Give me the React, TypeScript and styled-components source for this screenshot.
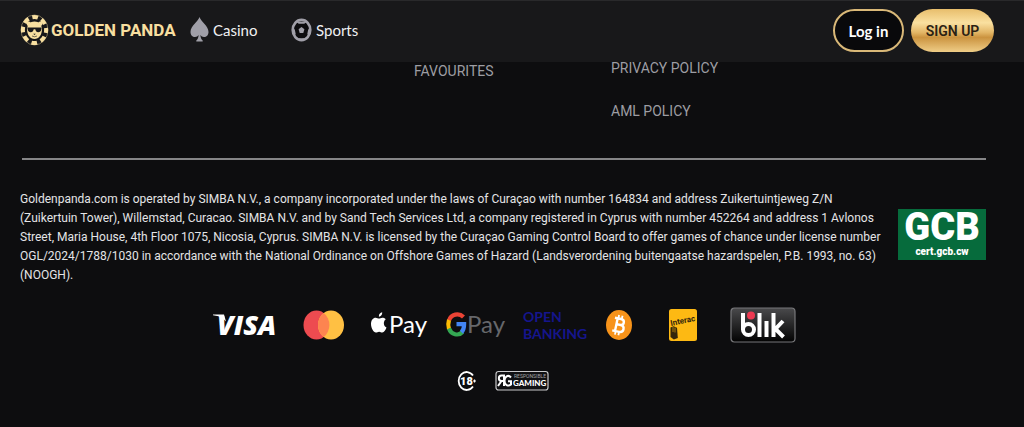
import React from 'react';
import styled, { createGlobalStyle } from 'styled-components';

const GlobalStyle = createGlobalStyle`
  * { box-sizing: border-box; }
  body {
    margin: 0;
    background: #0d0d0f;
    color: #e4e4e6;
    font-family: Roboto, 'Liberation Sans', sans-serif;
  }
  a { color: inherit; text-decoration: none; }
`;

const Header = styled.header`
  position: fixed;
  top: 0;
  left: 0;
  right: 0;
  z-index: 10;
  display: flex;
  align-items: center;
  justify-content: space-between;
  height: 62px;
  padding: 0 30px 2px 20px;
  background: #18181a;
  border-top: 1px solid #29292b;
`;

const Nav = styled.nav`
  display: flex;
  align-items: center;
  padding-bottom: 2px;
`;

const Brand = styled.a`
  display: flex;
  align-items: center;
  gap: 2px;
  width: 170px;
  color: #f8dfa0;
  font-size: 17px;
  font-weight: 700;
  white-space: nowrap;
`;

const NavLink = styled.a`
  display: flex;
  align-items: center;
  gap: 4px;
  width: 101px;
  color: #f0f0f2;
  font-family: Lato, sans-serif;
  font-size: 15px;
`;

const Actions = styled.div`
  display: flex;
  gap: 7px;
`;

const Button = styled.button<{ $gold?: boolean }>`
  height: 43px;
  width: ${(p) => (p.$gold ? 83 : 71)}px;
  padding: 0;
  border: ${(p) => (p.$gold ? '0' : '2px solid #d9b878')};
  border-radius: 22px;
  background: ${(p) =>
    p.$gold ? 'linear-gradient(180deg, #e8be6c 0%, #fae0a0 32%, #e2b565 55%, #cb933f 66%, #efcd87 100%)' : '#09090b'};
  color: ${(p) => (p.$gold ? '#2b2214' : '#ffffff')};
  font-family: ${(p) => (p.$gold ? 'Roboto' : 'Lato')}, sans-serif;
  font-size: ${(p) => (p.$gold ? 14 : 15)}px;
  font-weight: ${(p) => (p.$gold ? 600 : 700)};
`;

const Footer = styled.footer`
  padding: 58px 38px 32px 20px;
`;

const LinkColumns = styled.div`
  display: grid;
  grid-template-columns: 394px 197px 1fr;
  padding-bottom: 37px;
`;

const Divider = styled.hr`
  height: 2px;
  margin: 0 0 0 2px;
  border: 0;
  background: #858587;
`;

const LinkColumn = styled.div<{ $start: number; $lead?: number }>`
  grid-column: ${(p) => p.$start};
  display: flex;
  flex-direction: column;
  gap: 23px;
  padding-top: ${(p) => p.$lead ?? 0}px;
  color: #9d9da3;
  font-size: 14px;
  line-height: 20px;
`;

const Legal = styled.section`
  display: flex;
  align-items: center;
  justify-content: space-between;
  padding-top: 30px;
`;

const LegalText = styled.p`
  margin: 0;
  font-size: 12px;
  line-height: 19px;
  white-space: nowrap;
`;

const Seal = styled.a`
  display: flex;
  flex-direction: column;
  align-items: center;
  width: 88px;
  height: 51px;
  margin-bottom: 7px;
  background: #066b3c;
  color: #ffffff;
  font-weight: 900;
`;

const SealName = styled.span`
  font-size: 38px;
  line-height: 37px;
`;

const SealHost = styled.span`
  font-size: 10px;
  line-height: 12px;
`;

const LogoRow = styled.div<{ $gap: number; $top: number }>`
  display: flex;
  justify-content: center;
  align-items: center;
  gap: ${(p) => p.$gap}px;
  padding-top: ${(p) => p.$top}px;
`;

const Panda = () => (
  <svg width="29" height="32" viewBox="0 0 29 32" aria-hidden="true">
    <ellipse cx="14.500" cy="16" rx="13.500" ry="15" fill="none" stroke="#b9a77c" strokeWidth=".6" />
    <ellipse cx="14.500" cy="16" rx="11.600" ry="13" fill="none" stroke="#f8dfa0" strokeWidth="4" strokeDasharray="5.700 4" strokeDashoffset="2.800" />
    <ellipse cx="14.500" cy="16" rx="9" ry="10.200" fill="#18181a" />
    <circle cx="8.800" cy="9.800" r="2.200" fill="#f8dfa0" />
    <circle cx="20.200" cy="9.800" r="2.200" fill="#f8dfa0" />
    <path d="M14.500 7.500c4.500 0 7.400 3.200 7.400 8 0 5.500-3.200 9.500-7.400 9.500s-7.400-4-7.400-9.500c0-4.800 2.900-8 7.400-8Z" fill="#f8dfa0" />
    <path d="M7.500 13.500h14v1.200c-.5 2.600-1.600 3.500-3.300 3.500-1.600 0-2.500-1.200-2.900-3h-1.600c-.4 1.800-1.300 3-2.900 3-1.700 0-2.800-.9-3.300-3.500Z" fill="#18181a" />
    <path d="M13.200 19.800h2.600l-1.300 1.300Z" fill="#18181a" />
    <path d="M12 22q2.500 1.500 5 0" fill="none" stroke="#18181a" strokeWidth=".6" />
  </svg>
);

const Spade = () => (
  <svg width="19" height="25" viewBox="0 0 19 25" aria-hidden="true">
    <path d="M9.500 0C11 4.500 18.500 9 18.500 15c0 3-2 5-4.500 5-1.700 0-2.800-.8-3.600-2 .2 2.700.8 4.500 2.300 5.400V24.500H6.300v-1.100c1.500-.9 2.100-2.700 2.300-5.400-.8 1.200-1.900 2-3.600 2-2.500 0-4.500-2-4.500-5C.500 9 8 4.500 9.500 0Z" fill="#a09fa8" />
  </svg>
);

const Ball = () => (
  <svg width="21" height="24" viewBox="0 0 21 24" aria-hidden="true">
    <ellipse cx="10.500" cy="12" rx="8.800" ry="10.200" fill="#0c0c0e" stroke="#a09fa8" strokeWidth="2.600" />
    <path d="M5 3.500h11l-2.700 2.200h-5.600ZM1.500 10l2.300 1.500.9 4.500-1.600 1.800ZM19.500 10l-2.300 1.500-.9 4.500 1.600 1.800ZM7 20.200h7l-1.200 2.300H8.200Z" fill="#a09fa8" />
    <path d="m10.500 9 2.900 2.300-1.100 3.600H8.700l-1.100-3.600Z" fill="#a09fa8" />
  </svg>
);

const Visa = () => (
  <svg width="70" height="36" viewBox="0 0 70 36" role="img" aria-label="Visa">
    <path d="M3 7.500h11l2 7-3-3Q9 8.800 3 8.200Z" fill="#fff" />
    <text x="7" y="28" fontFamily="Open Sans, sans-serif" fontSize="27" fontWeight="800" fontStyle="italic" fill="#fff">VISA</text>
  </svg>
);

const Mastercard = () => (
  <svg width="62" height="36" viewBox="0 0 62 36" role="img" aria-label="Mastercard">
    <ellipse cx="24.500" cy="18" rx="13" ry="14.500" fill="#ed4b50" />
    <ellipse cx="39" cy="18" rx="13" ry="14.500" fill="#ffc043" />
    <path d="M31.700 6a13 14.500 0 0 1 0 24 13 14.500 0 0 1 0-24Z" fill="#fd8450" />
  </svg>
);

const ApplePay = () => (
  <svg width="64" height="36" viewBox="0 0 64 36" role="img" aria-label="Apple Pay">
    <path d="M15.800 13.200c-1.100-1.200-2.500-1.500-3.400-1.500-1.500 0-2.500.9-3.400.9-1 0-2-.9-3.300-.9-2.600 0-4.700 2.400-4.700 6.300 0 4.200 2.600 8.500 4.900 8.500 1.200 0 1.800-.8 3.200-.8s1.900.8 3.200.8c1.900 0 3.400-2.700 4.200-5-3.200-1.500-3.500-6.400-.7-8.300ZM12.200 6.200c-2 .2-3.600 2.200-3.300 4.500 2 .1 3.500-2.200 3.300-4.500Z" transform="translate(4 -1)" fill="#fff" />
    <text x="23" y="26" fontFamily="Lato, sans-serif" fontSize="24" fill="#fff">Pay</text>
  </svg>
);

const GooglePay = () => (
  <svg width="66" height="36" viewBox="0 0 66 36" role="img" aria-label="Google Pay">
    <g fill="none" strokeWidth="4.200" transform="translate(1 0)">
      <path d="M6 13.500C8 7 16 5.500 20.500 10" stroke="#ea4335" />
      <path d="M6 13Q4.500 17.500 6 22" stroke="#fbbc04" />
      <path d="M6 21.500c2 6 9.500 8 13.500 3.500" stroke="#34a853" />
      <path d="M13.500 17.200h7.600c0 3.500-.7 6-2.600 8" stroke="#4285f4" />
    </g>
    <text x="25" y="26" fontFamily="Lato, sans-serif" fontSize="24" fill="#66676b">Pay</text>
  </svg>
);

const OpenBanking = () => (
  <svg width="70" height="36" viewBox="0 0 70 36" role="img" aria-label="Open Banking">
    <g fontFamily="Lato, sans-serif" fontSize="14" fontWeight="700" fill="#15158c">
      <text x="3" y="15">OPEN</text>
      <text x="3" y="32">BANKING</text>
    </g>
  </svg>
);

const Bitcoin = () => (
  <svg width="32" height="36" viewBox="0 0 32 36" role="img" aria-label="Bitcoin">
    <ellipse cx="17" cy="18" rx="13" ry="15" fill="#f7931a" />
    <g transform="rotate(12 16 18)" fill="none" stroke="#fff" strokeWidth="2.400">
      <path d="M11.500 11.500h6.300c4.500 0 4.500 6 0 6h-3.500M11.500 24.500h7c5 0 5-7 0-7h-4M14.300 11.500v13" />
      <path d="M15 8v3.500M18.500 8v3.500M15 24.500V28M18.500 24.500V28" strokeWidth="1.800" />
    </g>
  </svg>
);

const Interac = () => (
  <svg width="72" height="36" viewBox="0 0 72 36" role="img" aria-label="Interac">
    <rect x="23" y="2" width="28" height="32" rx="2.500" fill="#fdb913" />
    <text x="25" y="19" transform="rotate(-12 25 19)" fontFamily="Roboto, sans-serif" fontSize="8" fontWeight="700" fill="#33260c">Interac</text>
    <path d="M24.500 20.500l3-1.200 3.500 1.500.8 10.200-4 1.500-3.300-2.500Z" fill="#33260c" />
    <path d="M27 20v5M29 20.500v5" stroke="#fdb913" strokeWidth=".6" />
  </svg>
);

const Blik = () => (
  <svg width="66" height="36" viewBox="0 0 66 36" role="img" aria-label="Blik">
    <defs>
      <linearGradient id="blikFill" x1="0" y1="0" x2="0" y2="1">
        <stop offset="0" stopColor="#4a4a4c" />
        <stop offset="1" stopColor="#020202" />
      </linearGradient>
    </defs>
    <rect x="1" y="1" width="64" height="34" rx="3.500" fill="url(#blikFill)" stroke="#77777a" strokeWidth="1.200" />
    <g fill="none" stroke="#fff" strokeWidth="4">
      <path d="M13 6v17" />
      <ellipse cx="18.500" cy="22.500" rx="5.500" ry="5.500" />
      <path d="M29.500 6v24M36.500 14v16M43.500 6v24M53 14l-7.500 8 8 8" />
    </g>
    <circle cx="21" cy="8.500" r="4" fill="#ee3a52" />
  </svg>
);

const Age18 = () => (
  <svg width="20" height="22" viewBox="0 0 20 22" role="img" aria-label="18 plus">
    <path d="M16 5.500A8 9 0 1 0 16 16.500" fill="none" stroke="#fff" strokeWidth="1.800" />
    <text x="3" y="15" fontFamily="Roboto, sans-serif" fontSize="11" fontWeight="900" fill="#fff">18</text>
    <path d="M16 11h3M17.500 9.500v3" stroke="#fff" strokeWidth="1.200" />
  </svg>
);

const ResponsibleGaming = () => (
  <svg width="54" height="22" viewBox="0 0 54 22" role="img" aria-label="Responsible Gaming">
    <rect x="1" y="1.500" width="52" height="18.500" rx="2.500" fill="#111113" stroke="#c9c9cb" strokeWidth="1.200" />
    <path d="M9 16V5.500H6.500c-3.500 0-3.500 5.500 0 5.500H9M6.500 11 3 16" fill="none" stroke="#fff" strokeWidth="2" />
    <path d="M16 7.500c-3-3.500-6.500-.500-6.500 3.300 0 4.200 3.500 6 6.500 3.700v-3.300h-3" fill="none" stroke="#fff" strokeWidth="2" />
    <text x="19" y="8" fontFamily="Roboto, sans-serif" fontSize="5" fill="#a6a6a8">RESPONSIBLE</text>
    <text x="18" y="16" fontFamily="Lato, sans-serif" fontSize="8" fontWeight="900" fill="#fff">GAMING</text>
  </svg>
);

export default function App() {
  return (
    <>
      <GlobalStyle />
      <Header>
        <Nav>
          <Brand href="#">
            <Panda />
            GOLDEN PANDA
          </Brand>
          <NavLink href="#casino">
            <Spade />
            Casino
          </NavLink>
          <NavLink href="#sports">
            <Ball />
            Sports
          </NavLink>
        </Nav>
        <Actions>
          <Button type="button">Log in</Button>
          <Button type="button" $gold>SIGN UP</Button>
        </Actions>
      </Header>
      <Footer>
        <LinkColumns>
          <LinkColumn $start={2} $lead={3}>
            <a href="#favourites">FAVOURITES</a>
          </LinkColumn>
          <LinkColumn $start={3}>
            <a href="#privacy">PRIVACY POLICY</a>
            <a href="#aml">AML POLICY</a>
          </LinkColumn>
        </LinkColumns>
        <Divider />
        <Legal>
          <LegalText>
            Goldenpanda.com is operated by SIMBA N.V., a company incorporated under the laws of Curaçao with number 164834 and address Zuikertuintjeweg Z/N<br />
            (Zuikertuin Tower), Willemstad, Curacao. SIMBA N.V. and by Sand Tech Services Ltd, a company registered in Cyprus with number 452264 and address 1 Avlonos<br />
            Street, Maria House, 4th Floor 1075, Nicosia, Cyprus. SIMBA N.V. is licensed by the Curaçao Gaming Control Board to offer games of chance under license number<br />
            OGL/2024/1788/1030 in accordance with the National Ordinance on Offshore Games of Hazard (Landsverordening buitengaatse hazardspelen, P.B. 1993, no. 63)<br />
            (NOOGH).
          </LegalText>
          <Seal href="#certificate">
            <SealName>GCB</SealName>
            <SealHost>cert.gcb.cw</SealHost>
          </Seal>
        </Legal>
        <LogoRow $gap={12} $top={22}>
          <Visa />
          <Mastercard />
          <ApplePay />
          <GooglePay />
          <OpenBanking />
          <Bitcoin />
          <Interac />
          <Blik />
        </LogoRow>
        <LogoRow $gap={18} $top={27}>
          <Age18 />
          <ResponsibleGaming />
        </LogoRow>
      </Footer>
    </>
  );
}
